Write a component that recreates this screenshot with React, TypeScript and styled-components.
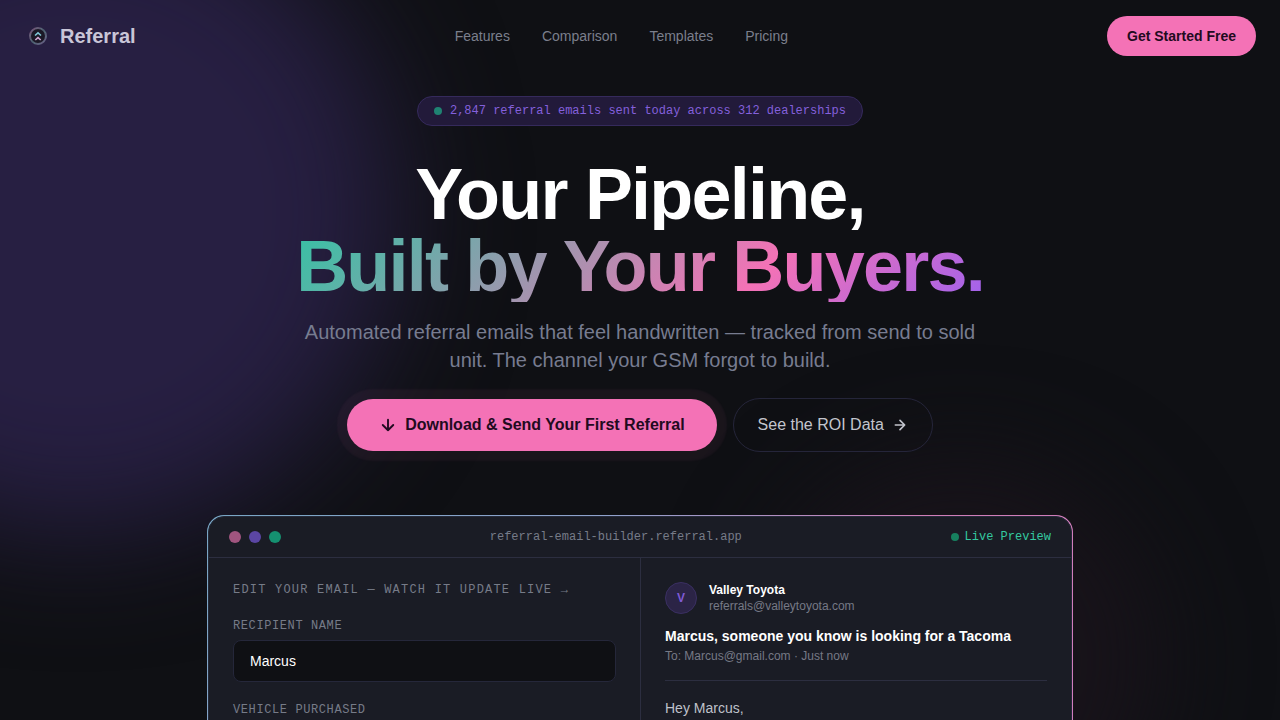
import React, { useState } from "react";
import styled, { createGlobalStyle } from "styled-components";

const sans = `"Liberation Sans", Arial, sans-serif`;
const mono = `"Liberation Mono", "Courier New", monospace`;

const GlobalStyle = createGlobalStyle`
  *, *::before, *::after { box-sizing: border-box; }
  body { margin: 0; background: #0f1014; color: #fff; font-family: ${sans}; }
  h1, p { margin: 0; }
  button, input { font-family: inherit; }
`;

const Page = styled.div`
  position: relative;
  height: 100vh;
  overflow: hidden;
`;

const Glow = styled.div<{ $color: string; $size: number; $blur: number }>`
  position: absolute;
  width: ${(p) => p.$size}px;
  height: ${(p) => p.$size}px;
  border-radius: 50%;
  background: ${(p) => p.$color};
  filter: blur(${(p) => p.$blur}px);
  pointer-events: none;
`;

const VioletGlow = styled(Glow)`
  top: -108px;
  left: -244px;
`;

const PinkGlow = styled(Glow)`
  bottom: -140px;
  right: 120px;
`;

const Header = styled.header`
  position: relative;
  display: flex;
  align-items: center;
  justify-content: space-between;
  height: 72px;
  padding: 0 24px;
`;

const Brand = styled.a`
  display: flex;
  align-items: center;
  gap: 8px;
  color: #c9c6d8;
  font-size: 20px;
  font-weight: 700;
  line-height: 28px;
  text-decoration: none;
`;

const Nav = styled.nav`
  display: flex;
  gap: 32px;
`;

const NavLink = styled.a`
  color: #7b7f8c;
  font-size: 14px;
  line-height: 20px;
  text-decoration: none;
`;

const Button = styled.button`
  display: inline-flex;
  align-items: center;
  justify-content: center;
  gap: 8px;
  border: 0;
  border-radius: 999px;
  background: #f472b6;
  color: #220a20;
  font-weight: 700;
  cursor: pointer;
`;

const HeaderButton = styled(Button)`
  height: 40px;
  padding: 0 20px;
  font-size: 14px;
`;

const PrimaryButton = styled(Button)`
  height: 52px;
  padding: 0 32px;
  font-size: 16px;
  box-shadow: 0 0 2px 10px rgba(244, 114, 182, 0.05);
`;

const OutlineButton = styled(Button)`
  height: 54px;
  padding: 0 24px;
  border: 1px solid #25253a;
  background: transparent;
  color: #c3c5cd;
  font-size: 16px;
  font-weight: 400;
`;

const Hero = styled.main`
  position: relative;
  display: flex;
  flex-direction: column;
  align-items: center;
  padding: 24px 16px 0;
`;

const Pill = styled.div`
  display: flex;
  align-items: center;
  gap: 8px;
  height: 30px;
  padding: 0 16px;
  border: 1px solid #352a5c;
  border-radius: 999px;
  background: #221a3a;
  color: #8460dc;
  font-family: ${mono};
  font-size: 12px;
`;

const Dot = styled.span<{ $size: number; $color: string }>`
  flex: none;
  width: ${(p) => p.$size}px;
  height: ${(p) => p.$size}px;
  border-radius: 50%;
  background: ${(p) => p.$color};
`;

const Title = styled.h1`
  margin-top: 32px;
  font-size: 72px;
  font-weight: 700;
  line-height: 72px;
  letter-spacing: -0.025em;
  text-align: center;
`;

const TitleLine = styled.span<{ $fill: string }>`
  display: block;
  background: ${(p) => p.$fill};
  background-clip: text;
  -webkit-background-clip: text;
  color: transparent;
`;

const Lead = styled.p`
  max-width: 672px;
  margin-top: 16px;
  color: #777c90;
  font-size: 20px;
  line-height: 28px;
  text-align: center;
`;

const Actions = styled.div`
  display: flex;
  align-items: center;
  gap: 16px;
  margin-top: 24px;
`;

const WindowFrame = styled.section`
  width: 100%;
  max-width: 866px;
  margin-top: 63px;
  padding: 1px;
  border-radius: 17px;
  background: linear-gradient(135deg, #78a6c4 0%, #8fa2cc 34%, #d07eb8 62%, #d07cc0 100%);
`;

const Window = styled.div`
  overflow: hidden;
  border: 1px solid #242938;
  border-radius: 16px;
  background: #1a1c25;
`;

const WindowBar = styled.div`
  display: flex;
  align-items: center;
  justify-content: space-between;
  height: 41px;
  padding: 0 20px;
  border-bottom: 1px solid #2c2e40;
  font-family: ${mono};
  font-size: 12px;
`;

const Lights = styled.div`
  display: flex;
  gap: 8px;
`;

const Address = styled.span`
  color: #767b88;
`;

const Live = styled.span`
  display: flex;
  align-items: center;
  gap: 6px;
  color: #34c9a0;
`;

const Panels = styled.div`
  display: grid;
  grid-template-columns: 1fr 1fr;
`;

const Editor = styled.form`
  display: flex;
  flex-direction: column;
  padding: 24px;
`;

const EditorHeading = styled.p`
  margin-bottom: 20px;
  color: #767b88;
  font-family: ${mono};
  font-size: 12px;
  line-height: 16px;
  letter-spacing: 0.1em;
`;

const Field = styled.div`
  display: flex;
  flex-direction: column;
  gap: 6px;
  margin-bottom: 20px;
`;

const Label = styled.label`
  color: #767b88;
  font-family: ${mono};
  font-size: 12px;
  line-height: 16px;
  letter-spacing: 0.05em;
`;

const Input = styled.input`
  width: 100%;
  height: 42px;
  padding: 0 16px;
  border: 1px solid #25273a;
  border-radius: 8px;
  background: #0f1014;
  color: #fff;
  font-size: 14px;
`;

const Preview = styled.article`
  padding: 24px;
  border-left: 1px solid #2c2e40;
`;

const Sender = styled.div`
  display: flex;
  align-items: center;
  gap: 12px;
`;

const Avatar = styled.span`
  display: grid;
  place-items: center;
  width: 32px;
  height: 32px;
  border: 1px solid #3a2f62;
  border-radius: 50%;
  background: #2b2446;
  color: #7f5ad6;
  font-size: 12px;
  font-weight: 700;
`;

const SenderName = styled.p`
  font-size: 12px;
  font-weight: 700;
  line-height: 16px;
`;

const Meta = styled.p`
  color: #767986;
  font-size: 12px;
  line-height: 16px;
`;

const Subject = styled.p`
  margin: 12px 0 2px;
  font-size: 14px;
  font-weight: 700;
  line-height: 20px;
`;

const Body = styled.p`
  margin-top: 16px;
  padding-top: 16px;
  border-top: 1px solid #2c2e40;
  color: #bfc1ca;
  font-size: 14px;
  line-height: 23px;
`;

const Logo = () => (
  <svg width="28" height="28" viewBox="0 0 28 28" fill="none" aria-hidden="true">
    <defs>
      <linearGradient id="ring" x1="0" y1="0" x2="1" y2="1">
        <stop offset="0" stopColor="#7d5078" />
        <stop offset="0.5" stopColor="#4b5f6e" />
        <stop offset="1" stopColor="#6c5a84" />
      </linearGradient>
    </defs>
    <circle cx="14" cy="14" r="8" fill="#1b1826" stroke="url(#ring)" strokeWidth="2" />
    <circle cx="14" cy="14" r="8" stroke="#5a8f92" strokeOpacity="0.4" strokeDasharray="2 3" />
    <path d="M11 13.5l3-2.6 3 2.6" stroke="#7fc6d6" strokeWidth="1.6" />
    <path d="M11.3 18l2.700-2.400 2.700 2.400" stroke="#d0a6d2" strokeWidth="1.6" />
  </svg>
);

const Arrow = ({ down }: { down?: boolean }) => (
  <svg
    width={down ? 18 : 16}
    height={down ? 18 : 16}
    viewBox="0 0 24 24"
    fill="none"
    stroke="currentColor"
    strokeWidth="2.5"
    strokeLinecap="round"
    strokeLinejoin="round"
    aria-hidden="true"
  >
    <path d={down ? "M12 5v14M5 12l7 7 7-7" : "M5 12h14M12 5l7 7-7 7"} />
  </svg>
);

const links = ["Features", "Comparison", "Templates", "Pricing"];

export default function App() {
  const [name, setName] = useState("Marcus");
  const [vehicle, setVehicle] = useState("");

  return (
    <Page>
      <GlobalStyle />
      <VioletGlow $color="#271f42" $size={640} $blur={60} />
      <PinkGlow $color="#18131a" $size={400} $blur={50} />
      <Header>
        <Brand href="#">
          <Logo />
          Referral
        </Brand>
        <Nav>
          {links.map((link) => (
            <NavLink key={link} href={`#${link.toLowerCase()}`}>
              {link}
            </NavLink>
          ))}
        </Nav>
        <HeaderButton type="button">Get Started Free</HeaderButton>
      </Header>
      <Hero>
        <Pill>
          <Dot $size={8} $color="#1f8272" />
          2,847 referral emails sent today across 312 dealerships
        </Pill>
        <Title>
          <TitleLine $fill="linear-gradient(#fff, #fff)">Your Pipeline,</TitleLine>
          <TitleLine $fill="linear-gradient(135deg, #36c2a4 0%, #f472b6 67%, #a062ec 100%)">
            Built by Your Buyers.
          </TitleLine>
        </Title>
        <Lead>
          Automated referral emails that feel handwritten — tracked from send to sold unit. The
          channel your GSM forgot to build.
        </Lead>
        <Actions>
          <PrimaryButton type="button">
            <Arrow down />
            Download &amp; Send Your First Referral
          </PrimaryButton>
          <OutlineButton type="button">
            See the ROI Data
            <Arrow />
          </OutlineButton>
        </Actions>
        <WindowFrame>
          <Window>
            <WindowBar>
              <Lights>
                <Dot $size={12} $color="#a0557f" />
                <Dot $size={12} $color="#5b46a4" />
                <Dot $size={12} $color="#159070" />
              </Lights>
              <Address>referral-email-builder.referral.app</Address>
              <Live>
                <Dot $size={8} $color="#17805f" />
                Live Preview
              </Live>
            </WindowBar>
            <Panels>
              <Editor>
                <EditorHeading>EDIT YOUR EMAIL — WATCH IT UPDATE LIVE →</EditorHeading>
                <Field>
                  <Label htmlFor="recipient">RECIPIENT NAME</Label>
                  <Input id="recipient" value={name} onChange={(e) => setName(e.target.value)} />
                </Field>
                <Field>
                  <Label htmlFor="vehicle">VEHICLE PURCHASED</Label>
                  <Input id="vehicle" value={vehicle} onChange={(e) => setVehicle(e.target.value)} />
                </Field>
              </Editor>
              <Preview>
                <Sender>
                  <Avatar>V</Avatar>
                  <div>
                    <SenderName>Valley Toyota</SenderName>
                    <Meta>referrals@valleytoyota.com</Meta>
                  </div>
                </Sender>
                <Subject>{name}, someone you know is looking for a Tacoma</Subject>
                <Meta>To: {name}@gmail.com · Just now</Meta>
                <Body>Hey {name},</Body>
              </Preview>
            </Panels>
          </Window>
        </WindowFrame>
      </Hero>
    </Page>
  );
}
